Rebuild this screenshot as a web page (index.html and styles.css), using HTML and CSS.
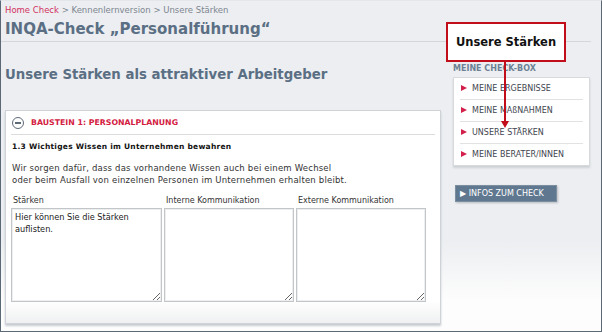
FILE: index.html
```html
<!DOCTYPE HTML>
<html lang="de">
<head>
<meta charset="utf-8" />
<meta name="viewport" content="width=device-width, initial-scale=1.0">
<title>INQA-Check Personalführung</title>
<link rel="stylesheet" href="styles.css">
</head>
<body>
<div class="page">
  <div class="head">
    <p class="crumbs"><a href="#">Home Check</a> &gt; Kennenlernversion &gt; Unsere Stärken</p>
    <h1>INQA-Check „Personalführung“</h1>
  </div>

  <div class="cols">
    <div class="main">
      <h2>Unsere Stärken als attraktiver Arbeitgeber</h2>

      <div class="box">
        <div class="box-head">
          <span class="toggle"></span>
          <span class="box-title">BAUSTEIN 1: PERSONALPLANUNG</span>
        </div>
        <h3>1.3 Wichtiges Wissen im Unternehmen bewahren</h3>
        <p class="intro">Wir sorgen dafür, dass das vorhandene Wissen auch bei einem Wechsel<br>
        oder beim Ausfall von einzelnen Personen im Unternehmen erhalten bleibt.</p>
        <div class="fields">
          <label class="field f1">Stärken
            <textarea>Hier können Sie die Stärken auflisten.</textarea>
          </label>
          <label class="field f2">Interne Kommunikation
            <textarea></textarea>
          </label>
          <label class="field f3">Externe Kommunikation
            <textarea></textarea>
          </label>
        </div>
      </div>
    </div>

    <div class="side">
      <h4>MEINE CHECK-BOX</h4>
      <ul class="menu">
        <li>MEINE ERGEBNISSE</li>
        <li>MEINE MAßNAHMEN</li>
        <li>UNSERE STÄRKEN</li>
        <li>MEINE BERATER/INNEN</li>
      </ul>
      <button class="infos">&#9654; INFOS ZUM CHECK</button>
    </div>
  </div>

  <!-- annotation over the page -->
  <div class="callout">Unsere Stärken</div>
  <div class="pointer"></div>
</div>
</body>
</html>
```

FILE: styles.css
```css
html, body {
  margin: 0;
  padding: 0;
}
body {
  font-family: "DejaVu Sans", Verdana, sans-serif;
  color: #222;
}
.page {
  position: relative;
  width: 602px;
  height: 332px;
  box-sizing: border-box;
  border: 1px solid #5b6876;
  border-top-color: #e4e7ea;
  background: linear-gradient(#eceef1 0px, #eceef1 240px, #fdfdfd 300px);
  overflow: hidden;
}

/* header */
.head {
  margin-right: 10px;
  padding: 3px 4px 2px;
  border-bottom: 1px solid #d3d7dc;
}
.crumbs {
  margin: 0;
  font-size: 8.5px;
  line-height: 12px;
  color: #7d8690;
}
.crumbs a {
  color: #d2335f;
  text-decoration: none;
}
h1 {
  margin: 3px 0 0;
  font-size: 15px;
  line-height: 20px;
  color: #5b6f84;
}

.cols {
  display: flex;
}
.main {
  width: 436px;
  padding-left: 4px;
}
h2 {
  margin: 24px 0 0;
  font-size: 13.3px;
  line-height: 18px;
  color: #5b6f84;
}

/* Baustein box */
.box {
  margin-top: 26px;
  height: 214px;
  box-sizing: border-box;
  border: 1px solid #cfd3d7;
  background: linear-gradient(#fff 0px, #fff 190px, #eeeff0 214px);
  box-shadow: 0 2px 2px #c8ccd0;
  padding: 0 5px;
}
.box-head {
  display: flex;
  align-items: center;
  height: 23px;
  border-bottom: 1px solid #dcdcdc;
}
.toggle {
  width: 10px;
  height: 10px;
  border: 1px solid #5d6a78;
  border-radius: 50%;
  margin-left: 1px;
  position: relative;
}
.toggle::after {
  content: "";
  position: absolute;
  left: 2px;
  top: 4px;
  width: 6px;
  height: 2px;
  background: #5d6a78;
}
.box-title {
  margin-left: 7px;
  font-size: 7.8px;
  font-weight: bold;
  color: #d3203f;
}
h3 {
  margin: 6px 0 0 1px;
  font-size: 7.5px;
  letter-spacing: 0.25px;
  line-height: 12px;
  color: #111;
}
.intro {
  margin: 9px 0 0 1px;
  font-size: 8.5px;
  letter-spacing: 0.2px;
  line-height: 12px;
  color: #333;
}
.fields {
  display: flex;
  margin-top: 9px;
  gap: 2px;
}
.field {
  display: flex;
  flex-direction: column;
  font-size: 8px;
  line-height: 12px;
  color: #333;
  padding-left: 2px;
}
.f1 { width: 149px; }
.f2 { width: 128px; }
.f3 { width: 128px; }
.field textarea {
  margin: 1px 0 0 -2px;
  height: 94px;
  box-sizing: border-box;
  border: 1px solid #c3c6c9;
  box-shadow: inset 0 0 0 1px #eceef0;
  padding: 2px 3px;
  font-family: "DejaVu Sans", Verdana, sans-serif;
  font-size: 8.2px;
  line-height: 12px;
  color: #222;
  resize: both;
}

/* sidebar */
.side {
  margin-left: 12px;
  padding-top: 21px;
  width: 137px;
}
h4 {
  margin: 0;
  font-size: 8px;
  line-height: 12px;
  color: #6d8194;
}
.menu {
  list-style: none;
  margin: 2px 0 0;
  padding: 0 6px;
  background: #fff;
  border: 1px solid #d6dadd;
  box-shadow: 0 2px 2px #cdd1d5;
}
.menu li {
  height: 21px;
  line-height: 21px;
  font-size: 8px;
  color: #3f4650;
  padding-left: 12px;
  position: relative;
  border-bottom: 1px solid #e2e2e2;
}
.menu li:last-child {
  border-bottom: none;
}
.menu li::before {
  content: "";
  position: absolute;
  left: 1px;
  top: 7px;
  border-left: 6px solid #d3204a;
  border-top: 3.5px solid transparent;
  border-bottom: 3.5px solid transparent;
}
.infos {
  margin: 19px 0 0 2px;
  height: 17px;
  width: 102px;
  padding: 0 0 0 4px;
  text-align: left;
  border: 1px solid #7c8fa0;
  background: #5f7890;
  color: #fff;
  font-family: "DejaVu Sans", Verdana, sans-serif;
  font-size: 8px;
  box-shadow: 1px 1px 2px #b7bcc2;
}

/* annotation */
.callout {
  position: absolute;
  left: 445px;
  top: 21px;
  width: 116px;
  height: 36px;
  border: 2px solid #c20e1a;
  background: #fff;
  font-size: 11.5px;
  font-weight: bold;
  line-height: 36px;
  text-align: center;
  color: #111;
}
.pointer {
  position: absolute;
  left: 503px;
  top: 61px;
  width: 2px;
  height: 60px;
  background: #c20e1a;
}
.pointer::after {
  content: "";
  position: absolute;
  left: -3px;
  bottom: -6px;
  border-top: 7px solid #c20e1a;
  border-left: 4px solid transparent;
  border-right: 4px solid transparent;
}
```
